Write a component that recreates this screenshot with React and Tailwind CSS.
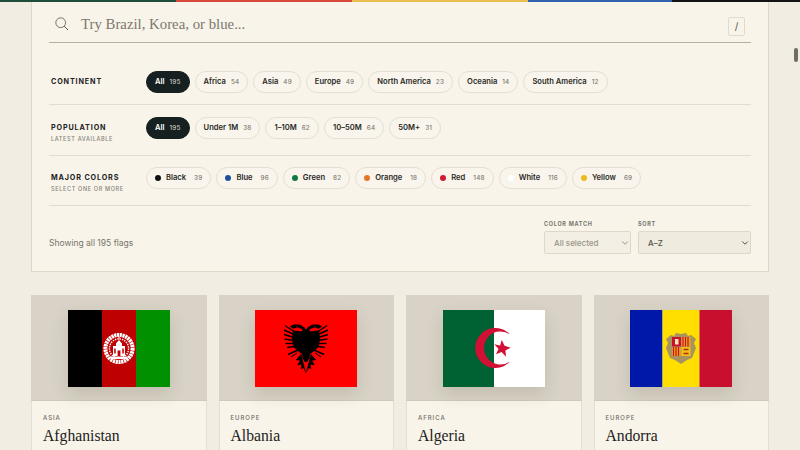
import { ChevronDown } from "lucide-react";

const continents = [
  ["All", 195],
  ["Africa", 54],
  ["Asia", 49],
  ["Europe", 49],
  ["North America", 23],
  ["Oceania", 14],
  ["South America", 12],
];
const populations = [
  ["All", 195],
  ["Under 1M", 38],
  ["1–10M", 62],
  ["10–50M", 64],
  ["50M+", 31],
];
const colors = [
  ["Black", 39, "bg-[#111111]"],
  ["Blue", 96, "bg-[#1d4f9f]"],
  ["Green", 82, "bg-[#0f7a43]"],
  ["Orange", 18, "bg-[#e5752a]"],
  ["Red", 148, "bg-[#cf1c2e]"],
  ["White", 116, "bg-white"],
  ["Yellow", 69, "bg-[#ecb81f]"],
];

const Pill = ({ label, count, dot, active }) => (
  <button
    className={`h-[22px] px-[8px] rounded-full border flex items-baseline leading-[20px] text-[7.6px] font-semibold ${
      active
        ? "bg-[#172020] border-[#172020] text-white"
        : "bg-[#f9f5ec] border-[#e4dfd2] text-[#2a2a26]"
    }`}>
    {dot && <span className={`self-center w-[6px] h-[6px] rounded-full mr-[5px] ${dot}`} />}
    <span>{label}</span>
    <span
      className={`${dot ? "ml-[8px]" : "ml-[5px]"} text-[6.3px] font-medium tracking-[0.03em] ${active ? "text-[#c9c8c0]" : "text-[#7d7a70]"}`}>
      {count}
    </span>
  </button>
);

const FilterRow = ({ title, hint, className, children }) => (
  <div className={`flex items-start border-b border-[#e2ddd0] ${className}`}>
    <div className="w-[97px] pl-[2px] shrink-0">
      <div className="text-[7.2px] leading-[22px] font-bold tracking-[0.12em] text-[#22221f]">{title}</div>
      {hint && (
        <div className="-mt-[3px] text-[5.5px] leading-[7px] font-medium tracking-[0.12em] text-[#85827a]">{hint}</div>
      )}
    </div>
    <div className="flex gap-[5px]">{children}</div>
  </div>
);

const SelectBox = ({ label, value, disabled, className }) => (
  <div className={className}>
    <div className="mb-[3px] text-[5.5px] font-bold tracking-[0.13em] text-[#77746a]">{label}</div>
    <div className="relative">
      <select
        disabled={disabled}
        defaultValue={value}
        className={`block w-full h-[23px] appearance-none rounded-[2px] border border-[#ddd8ca] pl-[9px] text-[8px] font-medium outline-none ${
          disabled ? "bg-[#f3efe4] text-[#98958a]" : "bg-[#f0ebdf] text-[#55534b]"
        }`}>
        <option>{value}</option>
      </select>
      <ChevronDown
        size={10}
        strokeWidth={2}
        className={`absolute right-[1px] top-[7px] ${disabled ? "text-[#85827a]" : "text-[#33322d]"}`}
      />
    </div>
  </div>
);

const AfghanFlag = () => (
  <svg viewBox="0 0 102 77" className="w-full h-full block">
    <rect width="34" height="77" fill="#000000" />
    <rect x="34" width="34" height="77" fill="#be0000" />
    <rect x="68" width="34" height="77" fill="#009000" />
    <circle cx="51" cy="38.5" r="13.6" fill="none" stroke="#ffffff" strokeWidth="4" strokeDasharray="2.2 0.6" />
    <circle cx="51" cy="38.5" r="9.6" fill="none" stroke="#ffffff" strokeWidth="1.4" strokeDasharray="1.4 1" />
    <path d="M42.5 46.5h17v2.6h-17z" fill="#ffffff" />
    <path d="M45 46V36h3v-2.5l3-3.5 3 3.5V36h3v10z" fill="#ffffff" />
    <path d="M49.6 46v-5.5h2.8V46zM46.2 38.5h1.5v5h-1.5zM54.3 38.5h1.5v5h-1.5z" fill="#be0000" />
    <path d="M51 26.5v3" stroke="#ffffff" strokeWidth="1" />
  </svg>
);

const EagleHalf = () => (
  <g fill="#000000" stroke="#000000">
    <path d="M-1 24-4 19-8 17.5-13 18.5-16 16.5-12 14.5-6 14.8-1 18Z" strokeWidth="0.2" />
    <path d="M0 19-5 21.5-13 20.5-14 28-12.5 37-8 41-4 44-3.5 48-1 52H0Z" strokeWidth="0.2" />
    <path d="M-5 44-10 50-6 50.5-8.5 55-4.5 54.5-5 59-2.5 58 0 63Z" strokeWidth="0.2" />
    <g strokeWidth="1.4" fill="none">
      <path d="M-12 21.5-21 15.5" />
      <path d="M-12 24.5-22 20" />
      <path d="M-12 27.5-22 24.5" />
      <path d="M-12 30.5-21.5 29" />
      <path d="M-12 33.5-20.5 33.5" />
      <path d="M-12 36.5-19 37.5" />
      <path d="M-8 40-18 44.5" />
      <path d="M-9 43-15 47" strokeWidth="1" />
    </g>
  </g>
);

const AlbanianFlag = () => (
  <svg viewBox="0 0 102 77" className="w-full h-full block">
    <rect width="102" height="77" fill="#ff0000" />
    <g transform="translate(51 0)">
      <EagleHalf />
      <g transform="scale(-1 1)">
        <EagleHalf />
      </g>
      <circle cx="-9" cy="16.8" r="0.6" fill="#ff0000" />
      <circle cx="9" cy="16.8" r="0.6" fill="#ff0000" />
    </g>
  </svg>
);

const AlgerianFlag = () => (
  <svg viewBox="0 0 102 77" className="w-full h-full block">
    <rect width="102" height="77" fill="#ffffff" />
    <rect width="51" height="77" fill="#006233" />
    <path d="M67 24.5A20 20 0 1 0 67 51.5 16.5 16.5 0 1 1 67 24.5Z" fill="#d21034" />
    <path
      d="M58.7 30 61.6 35.7 67.7 37.7 62.4 40.4 63 46.7 58.6 42.1 53 44.3 55.5 38.9 51.3 34.3 57.1 35.4Z"
      fill="#d21034"
    />
  </svg>
);

const AndorranFlag = () => (
  <svg viewBox="0 0 102 77" className="w-full h-full block">
    <rect width="32.5" height="77" fill="#0018a8" />
    <rect x="32.5" width="37" height="77" fill="#fedf00" />
    <rect x="69.5" width="32.5" height="77" fill="#c8102e" />
    <path
      d="M41 25 44 26 46 23 51 24 56 23 58 26 61 25 66 29 64 33 66 38 64 43 62 48 57 50 51 54 45 50 40 48 38 43 36 38 38 33 36 29Z"
      fill="#a8925e"
    />
    <rect x="42" y="27" width="9" height="9.5" fill="#c8102e" />
    <rect x="45" y="29" width="3.5" height="5.5" fill="#f6e6b0" />
    <rect x="51.5" y="27" width="9" height="9.5" fill="#e8a417" />
    <path d="M53 27v9.5M55.5 27v9.5M58 27v9.5" stroke="#c8102e" strokeWidth="1.2" />
    <rect x="42" y="37" width="9" height="9" fill="#e8a417" />
    <path d="M43.5 37v9M46 37v9M48.5 37v9" stroke="#c8102e" strokeWidth="1.2" />
    <rect x="51.5" y="37" width="9" height="9" fill="#f2c21a" />
    <path d="M53.5 39.5h5M53.5 43.5h5" stroke="#b5261e" strokeWidth="1.6" />
  </svg>
);

const cards = [
  { region: "ASIA", name: "Afghanistan", Flag: AfghanFlag },
  { region: "EUROPE", name: "Albania", Flag: AlbanianFlag },
  { region: "AFRICA", name: "Algeria", Flag: AlgerianFlag },
  { region: "EUROPE", name: "Andorra", Flag: AndorranFlag },
];

const FlagCard = ({ region, name, Flag }) => (
  <div className="h-[160px] bg-[#f8f4ea] border-x border-[#e4dfd2]">
    <div className="-mx-px h-[106px] bg-[#d8d3c6] border-b border-[#cfcabc] flex items-start justify-center pt-[15px]">
      <div className="w-[102px] h-[77px] shadow-[0_7px_16px_rgba(70,60,40,0.14)]">
        <Flag />
      </div>
    </div>
    <div className="px-[11px] pt-[12px]">
      <div className="text-[6px] font-medium tracking-[0.16em] text-[#6f6c63]">{region}</div>
      <div className="mt-[4px] font-['Liberation_Serif',serif] text-[15.7px] leading-[20px] text-[#1d1d1b]">{name}</div>
    </div>
  </div>
);

const App = () => {
  return (
    <div className="relative w-[800px] h-[450px] overflow-hidden bg-[#f1ede2] font-['Inter',sans-serif]">
      <div className="flex h-[2px]">
        <div className="w-[176px] bg-[#1f4d3a]" />
        <div className="w-[176px] bg-[#d8483b]" />
        <div className="w-[176px] bg-[#e9c04f]" />
        <div className="w-[144px] bg-[#2f64ad]" />
        <div className="w-[128px] bg-[#141414]" />
      </div>

      <div className="mx-[31px] h-[270px] bg-[#f8f4ea] border-x border-b border-[#ddd8ca] px-[17px]">
        <div className="h-[41px] pt-[4px] flex items-center border-b border-[#b4b0a2] px-[6px]">
          <svg viewBox="0 0 14 14" className="w-[14px] h-[14px] shrink-0 text-[#55534b]" fill="none" stroke="currentColor">
            <circle cx="5.7" cy="5.7" r="4.9" strokeWidth="0.8" />
            <path d="M9.2 9.2 13 13" strokeWidth="1" />
          </svg>
          <div className="ml-[12px] flex-1 font-['Liberation_Serif',serif] text-[14.8px] text-[#7b786e]">
            Try Brazil, Korea, or blue...
          </div>
          <div className="w-[17px] h-[19px] mt-[5px] rounded-[2px] border border-[#e0dbce] flex items-center justify-center text-[10px] text-[#55534b]">
            /
          </div>
        </div>

        <FilterRow title="CONTINENT" className="h-[62px] pt-[28px]">
          {continents.map(([label, count]) => (
            <Pill key={label} label={label} count={count} active={label === "All"} />
          ))}
        </FilterRow>
        <FilterRow title="POPULATION" hint="LATEST AVAILABLE" className="h-[51px] pt-[12px]">
          {populations.map(([label, count]) => (
            <Pill key={label} label={label} count={count} active={label === "All"} />
          ))}
        </FilterRow>
        <FilterRow title="MAJOR COLORS" hint="SELECT ONE OR MORE" className="h-[50px] pt-[11px]">
          {colors.map(([label, count, dot]) => (
            <Pill key={label} label={label} count={count} dot={dot} />
          ))}
        </FilterRow>

        <div className="flex items-end justify-between pt-[14px]">
          <div className="pb-[5px] text-[8.5px] text-[#77746a]">Showing all 195 flags</div>
          <div className="flex gap-[7px]">
            <SelectBox label="COLOR MATCH" value="All selected" disabled className="w-[87px]" />
            <SelectBox label="SORT" value="A–Z" className="w-[113px]" />
          </div>
        </div>
      </div>

      <div className="mx-[31px] mt-[23px] grid grid-cols-4 gap-3">
        {cards.map((card) => (
          <FlagCard key={card.name} {...card} />
        ))}
      </div>

      <div className="absolute right-[2px] top-[48px] w-[4px] h-[14px] rounded-full bg-[#6f6c63]" />
    </div>
  );
};

export default App;
